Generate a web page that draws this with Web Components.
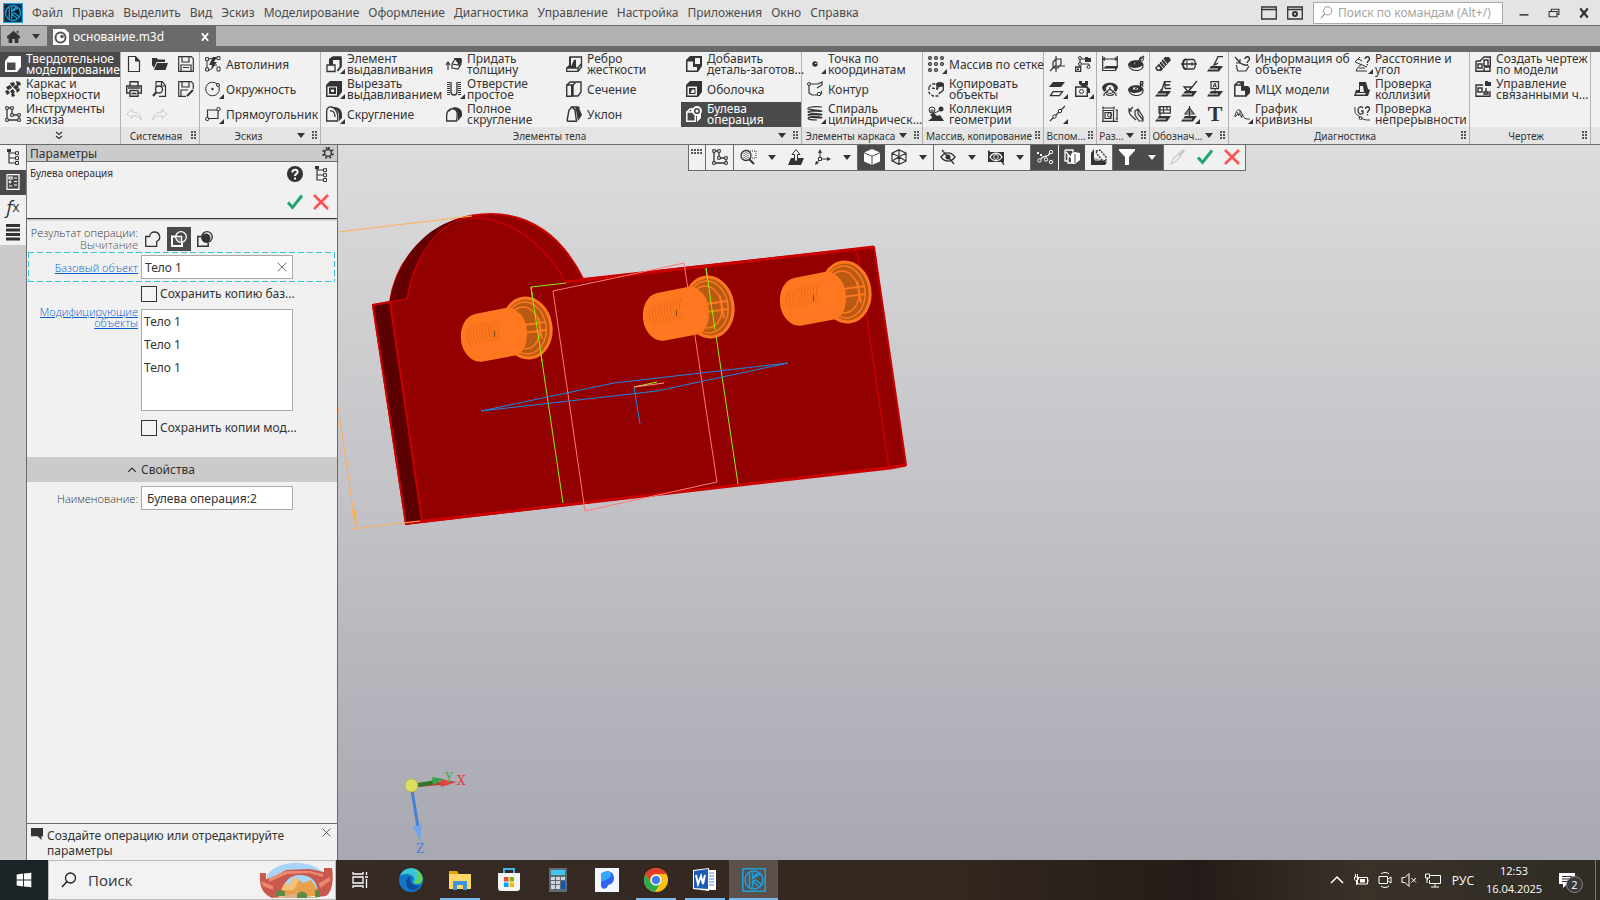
<!DOCTYPE html>
<html lang="ru">
<head>
<meta charset="utf-8">
<title>основание.m3d</title>
<style>
    body {
        margin: 0;
        height: 100vh;
        overflow: hidden;
        font-family: "Noto Sans", "Open Sans", sans-serif;
        font-size: 12px;
        color: #333;
    }
</style>
</head>
<body>
<cad-app></cad-app>

<script>
// 16x16 line icons, F marks a filled shape, W a node drawn over a line
const F = 'fill="currentColor" stroke="none"';
const W = 'fill="#f1f1f1"';
const ICONS = {
    solid: `<path ${F} d="M0 5L4 0h12v11l-4 5H0z"/><path fill="#4a4a4a" stroke="none" d="M2 6.500h8.500V14H2z"/>`,
    surface: `<path ${F} d="M5 2l4-1 1 3-3 2zM11 0l4 1 1 3-4 1zM1 6l4-2 2 3-4 2zM8 6l3-2 3 2-3 3zM0 10l3-1 2 3-3 2zM5 10l3-2 2 3-3 2zM6 13l3-1 1 3-3 1zM11 9l3-2 1 2-3 3z"/>`,
    sketch: `<path stroke-width="1.300" d="M2 2h5v7h7v5H2z"/><path ${W} d="M.700.700h2.600v2.600H.700zM5.700.700h2.600v2.600H5.700zM5.700 7.700h2.600v2.600H5.700zM12.700 7.700h2.600v2.600h-2.600zM12.700 12.700h2.600v2.600h-2.600zM.700 12.700h2.600v2.600H.700z"/>`,
    file: `<path stroke-width="1.200" d="M2.500.500h7l4 4.500v10.500h-11z"/><path ${F} d="M9 0l5 5.500H9z"/>`,
    folder: `<path ${F} d="M0 2h5l1 1.500h7V6H4.500L2 12 0 9zM5 7h11l-2.500 7H2z"/>`,
    save: `<path stroke-width="1.200" d="M.7.700h12.600l2 2v12.600H.700zM4 1v5h7V1M3 15V9h10v6M5 11.500h6"/>`,
    print: `<path stroke-width="1.400" d="M4 5V.700h8V5M4 12H.700V5h14.600v7H12M4 9.500h8v5.800H4zM2 7h12M5.500 12.500h5"/>`,
    preview: `<path stroke-width="1.200" d="M4 6V.700h6l3.500 4v10.600H7M9.500 1v4h4"/><circle cx="7" cy="8.500" r="3.500" stroke-width="1.300"/><path stroke-width="2" d="M4.500 11L1 15"/>`,
    saveas: `<path stroke-width="1.200" d="M8 15.300H.700V.700h12.600l2 2V8M4 1v5h7V1M3 15V9h7"/><path stroke-width="2" d="M9 15l6-6"/>`,
    undo: `<path d="M6 3L1 8l5 4.500V10c4-.500 7 0 9 4 0-5-3-8-9-8z"/>`,
    redo: `<path d="M10 3l5 5-5 4.500V10c-4-.500-7 0-9 4 0-5 3-8 9-8z"/>`,
    auto: `<path d="M2 13V4M3 3l9-1M4 14c4 0 3-5 8-5"/><path ${F} d="M8 1h4L9 6h3l-6 8 1-5H4z"/><path ${W} d="M.600 1.600h3v3h-3zM12 .600h3v3h-3zM.600 12h3v3h-3zM12 11h3v4h-3z"/>`,
    circle: `<circle cx="7.500" cy="8" r="6.800"/><circle cx="7.500" cy="8" r="1.200" ${F}/><circle cx="13" cy="4" r="1.500" ${W}/>`,
    rect: `<path stroke-width="1.200" d="M2.500 4H13v8.500H2.500z"/><circle cx="13.500" cy="3" r="1.700" ${W}/><circle cx="2.200" cy="13" r="1.700" ${W}/>`,
    extrude: `<path stroke-width="2" d="M6 9V3h8.500v8l-3 4"/><path stroke-width="1.300" d="M4 4l3-3h8v10M1 9h8v6.500H1z"/><path ${F} d="M3 3l3-2h9v3H6v5H3z"/>`,
    cut: `<path ${F} d="M0 4l4-4h12v11l-4 5H0z"/><path fill="#f1f1f1" stroke="none" d="M1.500 5.500h9.500v9H1.500z"/><path stroke-width="2" d="M4 7.500h5v4.500H4z"/>`,
    fillet: `<path stroke-width="1.300" d="M.700 15V5c0-6 9-6 11 4v6zM4 5c4-1 5 3 5 6"/><path ${F} d="M5 1h3c6 0 8 4 8 8v3l-3 3V9C12 4 9 2 5 1z"/>`,
    thick: `<path stroke-width="1.200" d="M6 8l3-5h6l-2 6zM6 9v3l6 1 3-5V4M2 14V7M0 9l2-3 2 3"/><path ${F} d="M8 2h7l1 3-3 4z"/>`,
    hole: `<path stroke-width="1.300" d="M5 1v10c0 4 6 4 6 0V1"/><path stroke-dasharray="1 1" stroke-width="3" d="M2.500 1v14M13.500 1v14"/>`,
    full: `<path stroke-width="1.300" d="M.700 15V9c0-5 5-8 9-5 3 3 1 6 1 11zM3 5c3-4 8-4 10-1"/><path ${F} d="M7 2c5-1 9 1 9 5v3l-4 5c0-6 1-9-5-13z"/>`,
    rib: `<path stroke-width="1.300" d="M4 1h11.500v10L12 15.300H.700V12L4 9zM1 12h11l3-4M12 12v3"/><path stroke-width="2" d="M4 1v10l5 0V4l-3 7"/>`,
    section: `<path stroke-width="1.400" d="M.700 4h5v11.300h-5zM7 4l3-3h5v10l-3 4H7zM1 4l3-3h5"/>`,
    draft: `<path stroke-width="1.400" d="M1 15.300h9.500L9 4l-3-3h6l1.500 1M3 4L1 15M3 4l3-3M9 4l2-2"/><path ${F} d="M11 1l2 1 3 7-4 6L10 4z"/>`,
    add: `<path ${F} d="M0 4l4-4h12v10l-4 6H0z"/><path fill="#f1f1f1" stroke="none" d="M1.500 5.500H7V11h4v3.500H1.500zM9 2h5v6H9z"/>`,
    shell: `<path ${F} d="M0 4l4-4h12v11l-4 5H0z"/><path fill="#f1f1f1" stroke="none" d="M1.500 5.500h9.500v9H1.500z"/><path ${F} d="M3 7h6.500v6H3z"/><path fill="#f1f1f1" stroke="none" d="M6 8.500h2.500V12H4.500z"/>`,
    bool: `<path ${F} d="M5 2h4l6 4v6l-4 4V8L5 6z"/><path fill="#4a4a4a" d="M.800 6h8.500v9.200H.800z" stroke-width="1.500"/><path d="M1 6l3-3h4" stroke-width="1.500"/><circle cx="11" cy="5" r="4" fill="#4a4a4a" stroke-width="1.800"/><circle cx="11" cy="5" r="1.500" ${F}/>`,
    point: `<circle cx="8" cy="8" r="2.700" ${F}/><path stroke="#f1f1f1" d="M8 7.500h1.500"/>`,
    contour: `<path stroke-width="1.200" d="M2 3h9l4-2v3M2 4v8l3 2h7c3 0 2-3 3-4M15 4l-5 3"/><circle cx="2" cy="3" r="1.500" ${W}/><circle cx="12" cy="13" r="1.700" ${W}/>`,
    spiral: `<path stroke-width="1.200" d="M15 1C3 0 0 2 1 3s14 1 14 2S1 4 1 6s14 1 14 2.500S1 7 1 9s14 1 14 2.500S1 10 1 12s3 2 9 2"/>`,
    grid: `<g stroke-width="1.300"><circle cx="2" cy="2" r="1.400"/><circle cx="8" cy="2" r="1.400"/><circle cx="14" cy="2" r="1.400"/><circle cx="2" cy="8" r="1.400"/><circle cx="8" cy="8" r="1.400"/><circle cx="14" cy="8" r="1.400"/><circle cx="2" cy="14" r="1.400"/><circle cx="8" cy="14" r="1.400"/></g>`,
    copy: `<path stroke-dasharray="3 1.500" stroke-width="1.300" d="M1 6l3-3h5M1 6v6l4 3h5l2-4M4 7l4 1 4-2"/><path stroke-width="1.300" d="M9 9V3M15.300 3v6l-3 3"/><ellipse cx="12" cy="3.500" rx="4" ry="2.500" ${F}/>`,
    collection: `<circle cx="4" cy="4" r="3"/><circle cx="4" cy="5" r="1.200"/><circle cx="13" cy="3" r="2.500" ${F}/><path d="M2 9l9-4"/><path ${F} d="M3 9l3-2 3 3 3-1 4 6H0l4-3z"/>`,
    axis3d: `<path stroke-width="1.200" d="M7 0v16M1 15l5-5h10M4 6l3-3h5v5l-3 4H4z"/>`,
    planes: `<path ${F} d="M4 1h12l-4 5H0z"/><path stroke-width="1.300" d="M4 10.700h9.500l-3 4H1.500z"/>`,
    segment: `<path stroke-width="1.200" d="M1 15l3.500-3.500M6.500 9.500L10 6M12 4l4-4"/><circle cx="5.500" cy="10.500" r="1.700"/><circle cx="11" cy="5" r="1.700"/>`,
    tree3: `<path stroke-width="1.200" d="M5 2v10M5 8h9M14 8v2M5 3h5"/><circle cx="5" cy="2" r="1.500" ${W}/><circle cx="5" cy="8" r="1.500" ${W}/><path ${F} d="M10 1h2.500l1 1H16v4h-6z"/><path ${W} stroke-width="1.300" d="M.700 11h5v4.300h-5z"/><path ${F} d="M2 12.500h2v1.500H2z"/><circle cx="13.500" cy="11" r="1.500" ${W}/>`,
    camera: `<path stroke-width="1.400" d="M.700 6h11.600v9.300H.700z"/><circle cx="6.500" cy="10.500" r="2"/><path ${F} d="M4 0h3v2h3V0h3v4l-3 2h3l2 2v4h-2V7l-5-1-4-3z"/>`,
    dim: `<path stroke-width="1.200" d="M.700 0v14.500h12.500L15.300 11V0M1 3h14"/><path stroke-width="1.200" d="M3 1.500L1.500 3 3 4.500M13 1.500L14.500 3 13 4.500"/><path ${F} d="M1 12.500l3-2.500h12l-3 5.500V12.500z"/>`,
    disc: `<path ${F} d="M0 8.500C1 4 10 3 14 6c2 2 2 4 1 6-3 5-14 4-15-3.500z"/><path fill="#f1f1f1" stroke="none" d="M1.500 10c3 3 9 2.500 13-.500 0 6-11 6-13 .5z"/><path stroke="#f1f1f1" d="M6 8l3-2"/><path stroke-width="1.500" d="M7 8l9-8"/><circle cx="13.500" cy="3" r="2"/>`,
    disc2: `<path ${F} d="M0 8.500C1 4 10 3 14 6c2 2 2 4 1 6-3 5-14 4-15-3.500z"/><path fill="#f1f1f1" stroke="none" d="M1.500 10c3 3 9 2.500 13-.500 0 6-11 6-13 .5zM5 6.500h5v2H5z"/><path stroke-width="1.200" d="M7 8l5-3M12.500 6V.700h2.300v2.500h-2l2.500 2.500"/>`,
    rings: `<path ${F} d="M0 7C1 0 15 0 16 7l-2 4-3-3V5H5v3l-3 3z"/><circle cx="8" cy="8" r="4.500" ${W}/><path stroke-width="1.200" d="M8 8l-6 5v2M8 8l6 5v2M8 8V6M4 13c2 2 6 2 8 0"/>`,
    frame: `<path stroke-width="1.200" d="M1 4.500h10.500v10.800H1zM1 2h11M1 .500v3M12 .500v3M15 4v9M13.500 4h2.500M13.500 13h2.500M3 6.500h6v6H3zM0 15.300h16"/><circle cx="7.500" cy="9" r="2"/>`,
    turn: `<path stroke-width="1.200" d="M7 5l3-2 5 8v4h-4L7 9zM7 9V5M10 3v5l5 6M1 5l4-4M1 2v3h3M1 5c0 4 3 5 7 9"/>`,
    thread: `<path ${F} d="M0 12L10 1l4 0 2 3L6 15l-4 0z"/><path stroke="#f1f1f1" d="M4 7l4 5M6 5l4 5M8 3l4 5"/><circle cx="3.500" cy="12" r="1.500" fill="#f1f1f1" stroke="none"/>`,
    pipe: `<path stroke-width="1.300" d="M5 3.500h7c3 0 3 9.500 0 9.500H5M0 8h16"/><path stroke-width="2" d="M5 3.500c-2 0-3 2-3 4.500s1 5 3 5"/><path d="M6 4v9M11 6v4"/>`,
    base1: `<path ${F} d="M4 10h12l-4 5.500H0z"/><path stroke="#f1f1f1" d="M2 13h9"/><path stroke-width="1.300" d="M6 11l5-10.300h5M8 9V6M8 9l3-2"/>`,
    base2: `<path ${F} d="M4 10h12l-4 5.500H0z"/><path stroke="#f1f1f1" d="M2 13h9"/><path stroke-width="1.300" d="M6 12L9.500.700H16M10 1v6.500M10 4h5M10 7.500h6M6 12V8"/>`,
    base3: `<path ${F} d="M4 10h12l-4 5.500H0z"/><path stroke="#f1f1f1" d="M2 13h9"/><path ${W} stroke-width="1.300" d="M3 6h7l-2.500 5z"/><path stroke-width="1.300" d="M7 11l9-11"/>`,
    base4: `<path ${F} d="M4 10h12l-4 5.500H0z"/><path stroke="#f1f1f1" d="M2 13h9"/><path ${W} stroke-width="1.200" d="M4 .700h7.500v7H4z"/><path d="M8 8v5M6 6.500L7.800 2l1.700 4.500M6.500 5h2.500"/>`,
    base5: `<path ${F} d="M4 10h12l-4 5.500H0z"/><path stroke="#f1f1f1" d="M2 13h9"/><path ${W} stroke-width="1.200" d="M4 .700h11.300v6.500H4z"/><path stroke-width="1.200" d="M5 12V1M8.500 1v6M12 1v3M4 4h11"/>`,
    base6: `<path ${F} d="M4 10h12l-4 5.500H0z"/><path stroke="#f1f1f1" d="M2 13h9"/><path ${W} stroke-width="1.200" d="M8.500 2l4.500 6H4z"/><path stroke-width="1.200" d="M8.500 0v12M6 6h5"/>`,
    letter: `<text ${F} x="8" y="15" text-anchor="middle" font-family="Liberation Serif, serif" font-size="22" font-weight="bold">T</text>`,
    info: `<path stroke-width="1.200" d="M1 1l5 6M6 3v4H2M2 9c2 3 0 4 2 6h8l3-5M6 7c3 1 4 3 8 2"/><path stroke-width="1.300" d="M11 3c0-3 4.500-3 4.500 0 0 2-2.200 1.500-2.200 4M13.300 8v1.200"/>`,
    mass: `<path stroke-width="1.500" d="M.800 4h7v5h4v6H.800zM1 4l3-3h6"/><path ${F} d="M4 1h6l0 4h4l2 2v5l-4 4V9H8V4z"/>`,
    curve: `<path d="M1 11C2 2 6 2 8 8s6 5 8 5M1 11c3-4 5-4 7 1M3 6l2 4M6 4v5M9 8l-2 3"/>`,
    angle: `<path d="M1 6l5-5M1 6l12 5M2 15h11M4 3l4 2M8 8c-3 2-5 4-6 7M5 12h6"/><path stroke-width="1.300" d="M11 3c0-3 4.500-3 4.500 0 0 2-2.200 1.500-2.200 4M13.300 8v1.200"/>`,
    collide: `<path ${F} d="M5 1h7l2 7 2 1-2 6H0l2-6h3z"/><path fill="#f1f1f1" stroke="none" d="M6 5h3l1 6H6zM2.500 12h9v1.500H2z"/>`,
    cont: `<path d="M1 1v4c0 5 4 3 5 7M7 12c3 2 5 2 9 2"/><circle cx="6.500" cy="12" r="1.500"/><path stroke-width="1.300" d="M9 2C7-.500 4 1 4 4.500S7 9 9 7V5H7M11.500 3c0-3 4-3 4 0 0 2-2 1.500-2 4M13.500 8v1.200"/>`,
    draw: `<path stroke-width="1.400" d="M1 5h5M1 5v10.300h14V11H9M3 8h4v4H3zM9 12v3M5 5l4-4h6.300v9H9V4h4v5"/>`,
    link: `<path stroke-width="1.400" d="M8 4H1v11.300h14V10M3 7h4v4H3zM9 11h4v2H9zM11 7v4"/><path ${F} d="M10 0h2.500l1 1H16v4h-6z"/>`,
    params: `<path stroke-width="1.200" d="M2 .700h12v14.600H2zM4 3h3v2H4zM9 4h3M9 7.500h3M9 11h3M4 7l2 2M6 7L4 9M4 12h3"/>`,
    tree: `<path stroke-width="1.200" d="M4 1v13h6M4 4h6M4 9h6"/><path ${F} d="M2 0h4v3H2z"/><path ${W} d="M10.500 2.700h3v3h-3zM10.500 7.700h3v3h-3zM10.500 12.500h3v3h-3z"/>`,
    bars: `<path stroke-width="3" d="M1 1.500h14M1 6h14M1 10.500h14M1 15h14"/>`,
    gear: `<circle cx="8" cy="8" r="4.500" stroke-width="1.800"/><path stroke-width="2.500" stroke-dasharray="2.400 3.100" d="M8 1.300a6.700 6.700 0 1 1-.010 0"/>`,
    help: `<circle cx="8" cy="8" r="8" ${F}/><path stroke="#fff" stroke-width="2" d="M5.300 6.500c0-4 5.700-3.500 5.400-.500-.2 2-2.700 1.800-2.700 4M8 11.500v2"/>`,
    check: `<path stroke="#22a66b" stroke-width="3" d="M1 8.500l4.500 5L15 1.500"/>`,
    cross: `<path stroke="#ff4f4f" stroke-width="2.500" d="M1 1l14 14M15 1L1 15"/>`,
    union: `<path stroke-width="1.300" d="M.700 5.500h4c0-6 9-6 10 0 .500 3-1 4-3 5v4.800h-11z"/>`,
    subtract: `<path stroke-width="2" d="M5 5.500H1v9.500h10v-3.500"/><circle cx="10" cy="6" r="5.300" stroke-width="1.300"/><path stroke-width="1.500" d="M5 5.500h5.500V11"/><path fill="#777" stroke="none" d="M6 6.300h4v4c-2 0-4-1-4-4z"/>`,
    intersect: `<path stroke-width="1.500" d="M4 5.500H.800v9.700h10.400V12"/><circle cx="10" cy="6" r="5.300" stroke-width="1.300"/><circle cx="9" cy="7" r="4.500" ${F}/>`,
    up: `<path stroke-width="2" d="M2 11l6-6 6 6"/>`,
    chevs: `<path stroke-width="1.200" d="M5 4l3 2.500L11 4M5 8l3 2.500L11 8"/>`,
    xthin: `<path stroke-width="1.300" d="M1 1l14 14M15 1L1 15"/>`,
    xbold: `<path stroke-width="3" d="M3 2l10 12M13 2L3 14"/>`,
    home: `<path ${F} d="M8 1l8 7v2h-2v6H9.500v-5h-3v5H2v-6H0V8zM12 1h2v4l-2-2z"/>`,
    doc: `<path fill="#fff" stroke="none" d="M0 0h12l4 4v12H0z"/><circle cx="7.500" cy="8.500" r="5" stroke="#555" stroke-width="2"/><circle cx="9" cy="7.500" r="1.800" fill="#555" stroke="none"/>`,
    search: `<circle cx="9.500" cy="6" r="5" stroke-width="1.300"/><path stroke-width="1.500" d="M6 9.500L1 15"/>`,
    win: `<path stroke-width="1.300" d="M.700 2h14.600v12H.700zM1 4.500h14"/>`,
    wingear: `<path stroke-width="1.300" d="M.700 2h14.600v12H.700zM1 4.500h14"/><circle cx="8" cy="9" r="2" stroke-width="2"/>`,
    min: `<path stroke-width="2" d="M2 10.500h12"/>`,
    restore: `<path stroke-width="1.500" d="M4.500 6V3h10v7H12M1.500 6h10.500v7H1.500z"/>`,
    zoomsel: `<circle cx="6" cy="6.500" r="5" stroke-width="1.300"/><path stroke-width="2" d="M9.500 10.500L14 15"/><path stroke-dasharray="1 1" d="M8 2h8v7h-4M4 4v5M6 3v7M8 4v5"/>`,
    normal: `<path ${F} d="M3 9h13l-3 7H0z"/><path ${W} d="M8 .500l4 5H9.500V12h-3V5.500H4z"/>`,
    axes: `<path d="M5 2v8h9M5 10l-4 5"/><path ${F} d="M3 4l2-4 2 4zM12 8l4 2-4 2zM0 16l1-4 3 2z"/><path ${W} d="M3.500 8.500h3v3h-3z"/>`,
    cube: `<path ${F} d="M8 0l8 3.500v9L8 16l-8-3.500v-9z"/><path stroke="#4a4a4a" d="M0 3.700l8 3.500 8-3.500M8 7v9"/>`,
    wire: `<path stroke-width="1.200" d="M8 .700l7 3.500v8L8 15.300l-7-3.500V4.200zM1 4.200l7 3.500 7-3.500M8 7.700v7.600M1 12l7-4 7 4M8 .700v7"/>`,
    eyeoff: `<path stroke-width="1.300" d="M1 8c4-5.500 10-5.500 14 0-4 5.500-10 5.500-14 0zM2 1l12 14"/><circle cx="8" cy="8" r="2.500" ${F}/>`,
    eyebox: `<path ${F} d="M0 2l1-1 1 2h14v10H0z"/><path stroke="#f1f1f1" stroke-width="1.300" d="M2 8c3-5 9-5 12 0-3 5-9 5-12 0z"/><circle cx="8" cy="8" r="2.300" stroke="#f1f1f1"/><path stroke-width="1.500" d="M14 13l2 2.500"/>`,
    percent: `<path stroke-width="1.200" d="M4 10c2-4 7-1 9-6"/><path ${F} d="M0 3h2v2H0zM3 5h2v2H3z"/><circle cx="14" cy="3" r="1.700"/><circle cx="2.500" cy="11.500" r="1.700"/><circle cx="9" cy="10.500" r="1.700"/><circle cx="14" cy="13" r="1.700"/>`,
    snap: `<path stroke-width="1.300" d="M1 1h8v4M1 1v11h3M2 3l8 9M4 5v9h6"/><path ${F} d="M7 5l4-2 5 1v7l-5 4-4-1z"/><path stroke="#4a4a4a" d="M11 5v9"/>`,
    corner: `<path ${F} d="M0 4l3-4v9l13 4-2 3H0z"/><path stroke="#f1f1f1" d="M4 5v6h5"/><path stroke-dasharray="2 1" stroke-width="1.300" d="M5 2l4-1 6 7v4l-4-1-5-6z"/>`,
    funnel: `<path ${F} d="M0 0h16v1.500L10 8v8H6V8L0 1.500z"/>`,
    pick: `<path stroke="#ccc" stroke-width="1.300" d="M1 15l2-5 6-5 2 2-6 6z"/><path stroke="#ccc" stroke-width="3.500" d="M9 6l5-5"/>`,
    note: `<path ${F} d="M0 0h16v11h-2v5l-5-5H0z"/>`,
    taskview: `<path stroke-width="1.300" d="M1 0v2h10V0M1 16v-2h10v2M1 5h10v6H1zM14.500 0v3M14.500 7v9M13 5h3"/>`,
    chev: `<path stroke-width="1.500" d="M2 11l6-6 6 6"/>`,
    battery: `<path d="M4.500 5.500h10v6.500h-10zM15 7.500v2.500M2.500 2v3M4.500 2v3M1.500 5h4v2c0 1-1 1.500-2 1.500s-2-.500-2-1.500zM3.500 8v5"/><path ${F} d="M7 7h5v3.500H7z"/>`,
    meet: `<path d="M2 4.500h8.500v7H2zM11 7l3-2v6l-3-2M4 2c2-2 6-2 8 0M4 14c2 2 6 2 8 0"/>`,
    sound: `<path d="M1 5.500h3l4-4v13l-4-4H1zM10.500 6l4.500 4.500M15 6l-4.500 4.500"/>`,
    net: `<path d="M5 3.500h10.500v8H4.500V8M10 12v3M6 15h8M2 7v4M0.500 2h4v4h-4zM2.500 6v2"/>`,
    notif: `<path ${F} d="M0 1h16v11H8l-4 4v-4H0z"/><path stroke="#352f27" d="M3 4.500h10M3 7h10M3 9.500h7"/>`,
    kompas: `<g stroke="#1ba1e2"><path d="M.500.500h15v15H.500z"/><circle cx="8" cy="8" r="6"/><path d="M5 3v10M7 3v4l3.500-4M7 13V9l4.500 3.500M7 7l5-3M7 9l2-1 4 3"/></g>`,
};

// Taskbar pictures on a 24x24 grid
const LOGOS = {
    start: `<path fill="#fff" d="M4 6l7-1v6.500H4zM12 5l8-1v7.500h-8zM4 12.500h7V19l-7-1zM12 12.500h8V20l-8-1z"/>`,
    edge: `<circle cx="12" cy="12" r="12" fill="#1278c9"/><path fill="#39c6d6" d="M1 8C4-1 17-3 22 6c3 5 1 10-4 10-4 0-5-2-3-4C16 6 6 4 1 8z"/><path fill="#63d45a" d="M16 1c7 3 10 10 6 14-2 1-6 1-7-1 5-3 4-9 1-13z"/><path fill="#0d4f97" d="M7 14c0-3 2-5 5-5-3 4 1 9 9 9-7 8-14 3-14-4z"/>`,
    explorer: `<path fill="#e6a400" d="M1 3h8l2 3h12v4H1z"/><path fill="#ffd766" d="M1 6h22v15H1z"/><path fill="#3f95dd" d="M5 22v-9h14v9h-4v-5H9v5z"/>`,
    store: `<path fill="none" stroke="#3cb8ee" stroke-width="2" d="M7 6V1h10v5"/><path fill="#f5f5f5" d="M1 5h22v15a3 3 0 0 1-3 3H4a3 3 0 0 1-3-3z"/><path fill="#e8502f" d="M7 9h4.500v4.500H7z"/><path fill="#7fba00" d="M12.500 9H17v4.500h-4.500z"/><path fill="#00a4ef" d="M7 14.500h4.500V19H7z"/><path fill="#ffb900" d="M12.500 14.500H17V19h-4.500z"/>`,
    calc: `<path fill="#5f6b76" d="M3 0h18v24H3z"/><path fill="#40c7ee" d="M5 2h14v5H5z"/><path fill="#cfd6dc" d="M5 9h4v3H5zM10 9h4v3h-4zM15 9h4v3h-4zM5 13h4v3H5zM10 13h4v3h-4zM5 17h4v4H5zM10 17h4v4h-4z"/><path fill="#0f59a8" d="M15 13h4v8h-4z"/>`,
    pblue: `<path fill="#f4f6ff" d="M0 0h24v24H0z"/><path fill="#2f63f2" d="M6 6c5-5 13-3 13 4 0 5-4 7-6 7-1 5-7 5-7 0z"/><path fill="#34a8ff" d="M6 6c3-3 8-3 10-1 0 6-5 7-10 9z"/>`,
    chrome: `<circle cx="12" cy="12" r="12" fill="#fbc116"/><path fill="#e33b2e" d="M1.600 6A12 12 0 0 1 22.400 6H12a6 6 0 0 0-5.200 9z"/><path fill="#2da94f" d="M1.600 6a12 12 0 0 0 9.400 18l5.200-9H6.800z"/><circle cx="12" cy="12" r="5.500" fill="#fff"/><circle cx="12" cy="12" r="4.300" fill="#3c7ff0"/>`,
    word: `<path fill="#fff" d="M10 2h13v20H10z"/><path stroke="#5b87cc" d="M15 5h6M15 8h6M15 11h6M15 14h6M15 17h6"/><path fill="#fff" d="M0 2l16-2v23L0 21z"/><path fill="#1d5bb5" d="M1 3l14-2v20L1 20z"/><path fill="none" stroke="#fff" stroke-width="2" d="M3 7l2 9 3-8 2 8 2-9"/>`,
};

class CadIcon extends HTMLElement {
    constructor() {
        super();
        this.attachShadow({ mode: 'open' });
    }

    connectedCallback() {
        const name = this.getAttribute('name');
        const logo = LOGOS[name];
        this.shadowRoot.innerHTML = `
            <style>
                :host { display: block; width: var(--size, 16px); height: var(--size, 16px); flex: none; }
                svg { display: block; width: 100%; height: 100%; overflow: visible; }
            </style>
            ${logo
                ? `<svg viewBox="0 0 24 24" aria-hidden="true">${logo}</svg>`
                : `<svg viewBox="0 0 16 16" fill="none" stroke="currentColor" aria-hidden="true">${ICONS[name]}</svg>`}
        `;
    }
}
customElements.define('cad-icon', CadIcon);

// Small drop-down triangle
class CadArrow extends HTMLElement {
    constructor() {
        super();
        this.attachShadow({ mode: 'open' }).innerHTML = `
            <style>
                :host { display: block; flex: none; width: 0; height: 0; border: 4px solid transparent; border-top: 5px solid currentColor; border-bottom: 0; }
            </style>
        `;
    }
}
customElements.define('cad-arrow', CadArrow);

class MenuBar extends HTMLElement {
    constructor() {
        super();
        this.attachShadow({ mode: 'open' });
    }

    connectedCallback() {
        const items = ['Файл', 'Правка', 'Выделить', 'Вид', 'Эскиз', 'Моделирование', 'Оформление', 'Диагностика',
            'Управление', 'Настройка', 'Приложения', 'Окно', 'Справка'];
        this.shadowRoot.innerHTML = `
            <style>
                :host { display: flex; align-items: center; height: 25px; background: #e4e4e4; border-bottom: 1px solid #6a6a6a; color: #4b4b4b; }
                button { border: 0; background: none; font: inherit; color: inherit; padding: 0; line-height: 20px; }
                .logo { --size: 20px; background: #10202c; margin: 0 3px; }
                nav { display: flex; flex: 1; gap: 9px; padding-left: 6px; }
                .tools { display: flex; align-items: center; gap: 10px; color: #333; }
                .search { display: flex; align-items: center; gap: 5px; width: 182px; height: 20px; border: 1px solid #aaa; background: #fff; padding: 0 0 0 6px; color: #999; --size: 13px; }
                input { border: 0; outline: 0; flex: 1; min-width: 0; padding: 0; font: inherit; color: #333; background: none; }
                input::placeholder { color: #a3a3a3; opacity: 1; }
                .window { display: flex; align-items: center; gap: 18px; padding: 0 10px 0 15px; --size: 14px; color: #333; }
                .window :last-child { --size: 12px; }
            </style>
            <cad-icon class="logo" name="kompas"></cad-icon>
            <nav>${items.map(t => `<button>${t}</button>`).join('')}</nav>
            <div class="tools">
                <button aria-label="Окно"><cad-icon name="win"></cad-icon></button>
                <button aria-label="Настройка окна"><cad-icon name="wingear"></cad-icon></button>
                <label class="search"><cad-icon name="search"></cad-icon><input type="text" placeholder="Поиск по командам (Alt+/)" aria-label="Поиск по командам"></label>
            </div>
            <div class="window">
                <button aria-label="Свернуть"><cad-icon name="min"></cad-icon></button>
                <button aria-label="Развернуть"><cad-icon name="restore"></cad-icon></button>
                <button aria-label="Закрыть"><cad-icon name="xbold"></cad-icon></button>
            </div>
        `;
    }
}
customElements.define('menu-bar', MenuBar);

class TabStrip extends HTMLElement {
    constructor() {
        super();
        this.attachShadow({ mode: 'open' }).innerHTML = `
            <style>
                :host { display: flex; height: 20px; background: #b1b1b1; border-bottom: 6px solid #6a6a6a; }
                button { border: 0; background: none; padding: 0; color: inherit; }
                .home { display: flex; align-items: center; gap: 12px; padding: 0 7px 0 6px; --size: 13px; border-left: 1px solid #6a6a6a; }
                .tab { display: flex; align-items: center; gap: 4px; width: 157px; padding: 2px 6px 0; background: #6a6a6a; color: #fff; line-height: 16px; }
                .tab span { flex: 1; }
                .tab button { --size: 10px; }
            </style>
            <button class="home" aria-label="Главная"><cad-icon name="home"></cad-icon><cad-arrow></cad-arrow></button>
            <div class="tab"><cad-icon name="doc"></cad-icon><span><slot></slot></span>
                <button aria-label="Закрыть вкладку"><cad-icon name="xbold"></cad-icon></button></div>
        `;
    }
}
customElements.define('tab-strip', TabStrip);

// One command of the ribbon; without text it is a square icon button
class RibbonButton extends HTMLElement {
    constructor() {
        super();
        this.attachShadow({ mode: 'open' });
    }

    connectedCallback() {
        const hasText = this.textContent.trim() !== '';
        this.shadowRoot.innerHTML = `
            <style>
                :host { display: block; width: 120px; height: 25px; }
                :host([square]) { width: 26px; }
                :host([active]) { background: #4a4a4a; color: #fff; }
                :host([off]) { color: #c9c9c9; }
                button { display: flex; align-items: center; gap: 5px; width: 100%; height: 100%; padding: 0 0 1px 5px; border: 0; background: none; font: inherit; color: inherit; line-height: 11px; text-align: left; white-space: nowrap; position: relative; }
                .more::after { content: ""; position: absolute; left: 19px; bottom: 3px; width: 5px; height: 5px; background: currentColor; clip-path: polygon(100% 0, 100% 100%, 0 100%); }
            </style>
            <button class="${this.hasAttribute('more') ? 'more' : ''}" ${hasText ? '' : `aria-label="${this.getAttribute('icon')}"`}>
                <cad-icon name="${this.getAttribute('icon')}"></cad-icon>
                ${hasText ? '<span><slot></slot></span>' : ''}
            </button>
        `;
    }
}
customElements.define('ribbon-button', RibbonButton);

class RibbonGroup extends HTMLElement {
    constructor() {
        super();
        this.attachShadow({ mode: 'open' });
    }

    connectedCallback() {
        const label = this.getAttribute('label');
        this.shadowRoot.innerHTML = `
            <style>
                :host { display: flex; flex-direction: column; flex: none; border-left: 1px solid #b1b1b1; }
                :host([first]) { border-left: 0; }
                .items { display: grid; grid-template-rows: repeat(3, 25px); grid-auto-flow: column; height: 75px; justify-content: start; }
                footer { display: flex; align-items: center; height: 17px; background: #e4e4e4; font-size: 10px; padding-right: 3px; }
                footer span { display: flex; justify-content: center; flex: 1; white-space: nowrap; width: 0; }
                footer cad-arrow { margin-right: 7px; }
                .grip { width: 5px; height: 9px; background: radial-gradient(circle at 1px 1px, #555 1px, transparent 1px) 0 0 / 3px 3px; }
            </style>
            <div class="items"><slot></slot></div>
            <footer><span>${label || '<cad-icon name="chevs"></cad-icon>'}</span>
                ${this.hasAttribute('menu') ? '<cad-arrow></cad-arrow>' : ''}
                ${label ? '<i class="grip"></i>' : ''}</footer>
        `;
    }
}
customElements.define('ribbon-group', RibbonGroup);

class CadRibbon extends HTMLElement {
    constructor() {
        super();
        this.attachShadow({ mode: 'open' }).innerHTML = `
            <style>
                :host { display: flex; background: #f1f1f1; border-bottom: 1px solid #6a6a6a; }
                .rest { flex: 1; border-left: 1px solid #b1b1b1; background: linear-gradient(#f1f1f1 75px, #e4e4e4 75px); }
                ribbon-group[first] { width: 120px; }
            </style>
            <ribbon-group first>
                <ribbon-button icon="solid" active>Твердотельное<br>моделирование</ribbon-button>
                <ribbon-button icon="surface">Каркас и<br>поверхности</ribbon-button>
                <ribbon-button icon="sketch">Инструменты<br>эскиза</ribbon-button>
            </ribbon-group>
            <ribbon-group label="Системная">
                <ribbon-button square icon="file"></ribbon-button>
                <ribbon-button square icon="print"></ribbon-button>
                <ribbon-button square icon="undo" off></ribbon-button>
                <ribbon-button square icon="folder"></ribbon-button>
                <ribbon-button square icon="preview"></ribbon-button>
                <ribbon-button square icon="redo" off></ribbon-button>
                <ribbon-button square icon="save"></ribbon-button>
                <ribbon-button square icon="saveas"></ribbon-button>
            </ribbon-group>
            <ribbon-group label="Эскиз" menu>
                <ribbon-button icon="auto">Автолиния</ribbon-button>
                <ribbon-button icon="circle" more>Окружность</ribbon-button>
                <ribbon-button icon="rect" more>Прямоугольник</ribbon-button>
            </ribbon-group>
            <ribbon-group label="Элементы тела" menu>
                <ribbon-button icon="extrude" more>Элемент<br>выдавливания</ribbon-button>
                <ribbon-button icon="cut" more>Вырезать<br>выдавливанием</ribbon-button>
                <ribbon-button icon="fillet" more>Скругление</ribbon-button>
                <ribbon-button icon="thick">Придать<br>толщину</ribbon-button>
                <ribbon-button icon="hole" more>Отверстие<br>простое</ribbon-button>
                <ribbon-button icon="full">Полное<br>скругление</ribbon-button>
                <ribbon-button icon="rib">Ребро<br>жесткости</ribbon-button>
                <ribbon-button icon="section">Сечение</ribbon-button>
                <ribbon-button icon="draft">Уклон</ribbon-button>
                <ribbon-button icon="add">Добавить<br>деталь-заготов...</ribbon-button>
                <ribbon-button icon="shell">Оболочка</ribbon-button>
                <ribbon-button icon="bool" active>Булева<br>операция</ribbon-button>
            </ribbon-group>
            <ribbon-group label="Элементы каркаса" menu>
                <ribbon-button icon="point" more>Точка по<br>координатам</ribbon-button>
                <ribbon-button icon="contour">Контур</ribbon-button>
                <ribbon-button icon="spiral" more>Спираль<br>цилиндрическ...</ribbon-button>
            </ribbon-group>
            <ribbon-group label="Массив, копирование">
                <ribbon-button icon="grid" more>Массив по сетке</ribbon-button>
                <ribbon-button icon="copy">Копировать<br>объекты</ribbon-button>
                <ribbon-button icon="collection">Коллекция<br>геометрии</ribbon-button>
            </ribbon-group>
            <ribbon-group label="Вспом...">
                <ribbon-button square icon="axis3d"></ribbon-button>
                <ribbon-button square icon="planes" more></ribbon-button>
                <ribbon-button square icon="segment" more></ribbon-button>
                <ribbon-button square icon="tree3"></ribbon-button>
                <ribbon-button square icon="camera" more></ribbon-button>
            </ribbon-group>
            <ribbon-group label="Раз..." menu>
                <ribbon-button square icon="dim"></ribbon-button>
                <ribbon-button square icon="rings"></ribbon-button>
                <ribbon-button square icon="frame"></ribbon-button>
                <ribbon-button square icon="disc"></ribbon-button>
                <ribbon-button square icon="disc2"></ribbon-button>
                <ribbon-button square icon="turn"></ribbon-button>
            </ribbon-group>
            <ribbon-group label="Обознач..." menu>
                <ribbon-button square icon="thread"></ribbon-button>
                <ribbon-button square icon="base2"></ribbon-button>
                <ribbon-button square icon="base5"></ribbon-button>
                <ribbon-button square icon="pipe"></ribbon-button>
                <ribbon-button square icon="base3"></ribbon-button>
                <ribbon-button square icon="base6" more></ribbon-button>
                <ribbon-button square icon="base1"></ribbon-button>
                <ribbon-button square icon="base4"></ribbon-button>
                <ribbon-button square icon="letter"></ribbon-button>
            </ribbon-group>
            <ribbon-group label="Диагностика">
                <ribbon-button icon="info">Информация об<br>объекте</ribbon-button>
                <ribbon-button icon="mass">МЦХ модели</ribbon-button>
                <ribbon-button icon="curve" more>График<br>кривизны</ribbon-button>
                <ribbon-button icon="angle" more>Расстояние и<br>угол</ribbon-button>
                <ribbon-button icon="collide">Проверка<br>коллизий</ribbon-button>
                <ribbon-button icon="cont">Проверка<br>непрерывности</ribbon-button>
            </ribbon-group>
            <ribbon-group label="Чертеж">
                <ribbon-button icon="draw">Создать чертеж<br>по модели</ribbon-button>
                <ribbon-button icon="link">Управление<br>связанными ч...</ribbon-button>
            </ribbon-group>
            <div class="rest"></div>
        `;
    }
}
customElements.define('cad-ribbon', CadRibbon);

class SideStrip extends HTMLElement {
    constructor() {
        super();
        this.attachShadow({ mode: 'open' }).innerHTML = `
            <style>
                :host { display: block; width: 26px; flex: none; background: #cbcbcb; border-right: 1px solid #6a6a6a; }
                button { display: flex; align-items: center; justify-content: center; width: 26px; height: 25px; padding: 0 0 1px; border: 0; background: #f1f1f1; color: #333; }
                .on { background: #4a4a4a; color: #fff; }
                .fx { font: italic 18px/20px "Open Sans", sans-serif; }
                sub { font-size: 14px; font-style: normal; line-height: 0; }
            </style>
            <button aria-label="Дерево"><cad-icon name="tree"></cad-icon></button>
            <button class="on" aria-label="Параметры"><cad-icon name="params"></cad-icon></button>
            <button class="fx">f<sub>x</sub></button>
            <button aria-label="Список"><cad-icon name="bars"></cad-icon></button>
        `;
    }
}
customElements.define('side-strip', SideStrip);

class ParamsPanel extends HTMLElement {
    constructor() {
        super();
        this.attachShadow({ mode: 'open' }).innerHTML = `
            <style>
                :host { display: flex; flex-direction: column; flex: none; width: 310px; background: #f1f1f1; border-right: 1px solid #6a6a6a; }
                button { border: 0; background: none; padding: 0; color: inherit; font: inherit; }
                header { display: flex; align-items: center; justify-content: space-between; height: 16px; padding: 0 3px; background: #cbcbcb; border-bottom: 1px solid #6a6a6a; --size: 12px; }
                .head { display: grid; grid-template-columns: 1fr 16px 16px; gap: 12px 10px; align-content: start; height: 52px; padding: 4px 8px 0 3px; border-bottom: 1px solid #333; box-shadow: 0 1px 2px #aaa; font-size: 10px; line-height: 14px; }
                .head .ok { grid-column: 2; }
                .row { display: grid; grid-template-columns: 111px 152px; column-gap: 3px; }
                .row > :first-child { justify-self: end; text-align: right; line-height: 11px; align-self: center; white-space: nowrap; }
                .light, a { font-family: "Open Sans", sans-serif; font-weight: 300; font-size: 11px; }
                a { color: #0a5fd0; text-decoration: underline; }
                .result { padding: 8px 0 0; }
                .modes { display: flex; gap: 2px; align-items: center; }
                .modes button { width: 24px; height: 24px; display: flex; align-items: center; justify-content: center; }
                .modes .on { background: #4a4a4a; color: #fff; }
                .result > :first-child { line-height: 12px; }
                .muted { color: #555; }
                .target {
                    --h: repeating-linear-gradient(90deg, #35c6dc 0 6px, transparent 6px 9px);
                    --v: repeating-linear-gradient(#35c6dc 0 6px, transparent 6px 9px);
                    margin: 1px 2px 0 1px; padding: 3px 0; grid-template-columns: 110px 152px;
                    background: var(--h) 0 0 / 100% 1px, var(--h) 0 100% / 100% 1px, var(--v) 0 0 / 1px 100%, var(--v) 100% 0 / 1px 100%;
                    background-repeat: no-repeat;
                }
                .field { display: flex; align-items: center; height: 22px; border: 1px solid #aaa; background: #fff; padding: 0 5px 0 3px; }
                .field button { --size: 10px; color: #555; }
                .field.named { padding-left: 5px; }
                input[type=text] { flex: 1; min-width: 0; border: 0; outline: 0; padding: 0; background: none; font: inherit; color: inherit; }
                .keep { display: flex; align-items: center; gap: 3px; margin-left: 114px; }
                .target + .keep { margin-top: 3px; }
                input[type=checkbox] { appearance: none; width: 16px; height: 16px; margin: 0; border: 1px solid #333; background: #f4f4f4; }
                ul { margin: 0; padding: 0 2px; list-style: none; height: 100px; border: 1px solid #aaa; background: #fff; line-height: 23px; }
                .mods { padding: 7px 0 8px; }
                .mods > :first-child { align-self: start; margin-top: -3px; }
                h2 { display: flex; align-items: center; gap: 4px; height: 25px; margin: 21px 0 4px; padding-left: 100px; background: #cbcbcb; font: inherit; --size: 10px; }
                .hint { display: flex; gap: 4px; margin-top: auto; padding: 4px 6px 2px 4px; border-top: 1px solid #6a6a6a; line-height: 15px; --size: 12px; }
                .hint p { flex: 1; margin: 0; }
                .hint button { align-self: start; --size: 9px; }
            </style>
            <header><span>Параметры</span><button aria-label="Настройка"><cad-icon name="gear"></cad-icon></button></header>
            <div class="head">
                <span>Булева операция</span>
                <button aria-label="Справка"><cad-icon name="help"></cad-icon></button>
                <button aria-label="Дерево"><cad-icon name="tree"></cad-icon></button>
                <button class="ok" aria-label="Создать"><cad-icon name="check"></cad-icon></button>
                <button aria-label="Отмена"><cad-icon name="cross"></cad-icon></button>
            </div>
            <div class="row result">
                <div class="light">Результат операции:<br><span class="muted">Вычитание</span></div>
                <div class="modes">
                    <button aria-label="Объединение"><cad-icon name="union"></cad-icon></button>
                    <button class="on" aria-label="Вычитание"><cad-icon name="subtract"></cad-icon></button>
                    <button aria-label="Пересечение"><cad-icon name="intersect"></cad-icon></button>
                </div>
            </div>
            <div class="row target">
                <div><a href="#base">Базовый объект</a></div>
                <div class="field"><input type="text" value="Тело 1" aria-label="Базовый объект"><button aria-label="Очистить"><cad-icon name="xthin"></cad-icon></button></div>
            </div>
            <label class="keep"><input type="checkbox">Сохранить копию баз...</label>
            <div class="row mods">
                <div><a href="#mods">Модифицирующие<br>объекты</a></div>
                <ul aria-label="Модифицирующие объекты"><li>Тело 1</li><li>Тело 1</li><li>Тело 1</li></ul>
            </div>
            <label class="keep"><input type="checkbox">Сохранить копии мод...</label>
            <h2><cad-icon name="up"></cad-icon>Свойства</h2>
            <div class="row">
                <label class="light" for="name">Наименование:</label>
                <div class="field named"><input type="text" id="name" value="Булева операция:2"></div>
            </div>
            <div class="hint">
                <cad-icon name="note"></cad-icon>
                <p>Создайте операцию или отредактируйте параметры</p>
                <button aria-label="Закрыть"><cad-icon name="xthin"></cad-icon></button>
            </div>
        `;
    }
}
customElements.define('params-panel', ParamsPanel);

// Toolbar floating over the model
class ViewToolbar extends HTMLElement {
    constructor() {
        super();
        this.attachShadow({ mode: 'open' }).innerHTML = `
            <style>
                :host { display: flex; height: 25px; background: #f1f1f1; border: 1px solid #6a6a6a; border-top: 0; color: #333; }
                div { display: flex; border-left: 1px solid #6a6a6a; }
                button { display: flex; align-items: center; justify-content: center; width: 27px; padding: 0 0 1px; border: 0; background: none; color: inherit; }
                .drop { width: 21px; }
                .drop.on { width: 23px; }
                .on { background: #4a4a4a; color: #fff; }
                .on + .on:not(.drop) { border-left: 1px solid #f1f1f1; }
                .grip { width: 12px; height: 6px; margin: 4px 2px; background: radial-gradient(circle at 1px 1px, #555 1px, transparent 1px) 0 0 / 3px 3px; }
            </style>
            <i class="grip"></i>
            <div><button aria-label="Эскиз"><cad-icon name="sketch"></cad-icon></button></div>
            <div>
                <button aria-label="Масштаб"><cad-icon name="zoomsel"></cad-icon></button><button class="drop" aria-label="Ещё"><cad-arrow></cad-arrow></button>
                <button aria-label="Нормально"><cad-icon name="normal"></cad-icon></button>
                <button aria-label="Ориентация"><cad-icon name="axes"></cad-icon></button><button class="drop" aria-label="Ещё"><cad-arrow></cad-arrow></button>
            </div>
            <div>
                <button class="on" aria-label="Полутоновое"><cad-icon name="cube"></cad-icon></button>
                <button aria-label="Каркас"><cad-icon name="wire"></cad-icon></button><button class="drop" aria-label="Ещё"><cad-arrow></cad-arrow></button>
            </div>
            <div>
                <button aria-label="Скрыть"><cad-icon name="eyeoff"></cad-icon></button><button class="drop" aria-label="Ещё"><cad-arrow></cad-arrow></button>
                <button aria-label="Показать"><cad-icon name="eyebox"></cad-icon></button><button class="drop" aria-label="Ещё"><cad-arrow></cad-arrow></button>
            </div>
            <div>
                <button class="on" aria-label="Привязки"><cad-icon name="percent"></cad-icon></button>
                <button class="on" aria-label="Компоненты"><cad-icon name="snap"></cad-icon></button>
                <button aria-label="Контекст"><cad-icon name="corner"></cad-icon></button>
            </div>
            <div>
                <button class="on" aria-label="Фильтр"><cad-icon name="funnel"></cad-icon></button><button class="drop on" aria-label="Ещё"><cad-arrow></cad-arrow></button>
            </div>
            <div>
                <button aria-label="Пипетка"><cad-icon name="pick"></cad-icon></button>
                <button aria-label="Создать"><cad-icon name="check"></cad-icon></button>
                <button aria-label="Отмена"><cad-icon name="cross"></cad-icon></button>
            </div>
        `;
    }
}
customElements.define('view-toolbar', ViewToolbar);

class ModelView extends HTMLElement {
    constructor() {
        super();
        this.attachShadow({ mode: 'open' });
    }

    // Threaded hole body: a shank made of rings plus the countersink
    bolt(dx, dy) {
        let rings = '';
        for (let i = 0; i < 11; i++) {
            rings += `<path d="M${470 + i * 3} ${326 - i * 0.700}q-6 8 1 20"/>`;
        }
        return `
            <g transform="translate(${dx} ${dy})" fill="none" stroke="#ff781f">
                <ellipse cx="527" cy="328" rx="24" ry="30" fill="#b85a14" stroke-width="3" transform="rotate(-8 527 328)"/>
                <ellipse cx="526" cy="328" rx="20" ry="26" stroke-width="1.500" transform="rotate(-8 526 328)"/>
                <ellipse cx="524" cy="328" rx="16" ry="21" stroke-width="1.500" transform="rotate(-8 524 328)"/>
                <path stroke-width="2" d="M524 325l22-3M524 333l22-3M538 317l4 22"/>
                <path fill="#ff781f" stroke="none" d="M475 314l33-6.500c12 2 19 12 19 26 0 12-4 20-12 22l-32 6c-11 2-21-9-22-22-1-12 4-23 14-25.500z"/>
                <g stroke="#cf6018" stroke-width=".5">${rings}</g>
                <path stroke="#8a4510" d="M494.500 331v6"/>
            </g>`;
    }

    connectedCallback() {
        this.shadowRoot.innerHTML = `
            <style>
                :host { display: block; flex: 1; min-width: 0; position: relative; overflow: hidden; background: linear-gradient(#dcdcdc, #a8a8b2); }
                svg { position: absolute; left: 0; top: 0; }
                view-toolbar { position: absolute; left: 350px; top: 0; }
                text { font: 12px "DejaVu Serif", serif; }
            </style>
            <svg width="1262" height="715" viewBox="338 145 1262 715" fill="none">
                <g stroke="#c80000" stroke-width="2" stroke-linejoin="round">
                    <path fill="#930000" d="M390 302C397 252 440 214 491 214C530 214 562 236 583 279L874 247L906 465L406 524L373 305z"/>
                    <path fill="#640000" stroke="none" d="M390 301C397 258 430 219 472 217C440 226 415 255 407 299z"/>
                    <path fill="#5a0000" d="M373 305L390 302L422 521L406 524z"/>
                    <path stroke-width="1.500" d="M390 302l17-3C415 250 445 218 472 218C508 217 545 243 566 283M857 251L889 468"/>
                    <path stroke-width="3" d="M566 282L874 247M407 523L890 468l16-3"/>
                </g>
                <g stroke="#ffae55">
                    <path d="M338 232L472 216M338 407L356 528M351 529L420 521"/>
                    <path fill="#ffae55" stroke="none" d="M351 510l5-1 1 18z"/>
                </g>
                <path stroke="#f77" d="M553 291L610 279L684 263L717 482L585 511z"/>
                <path stroke="#8ef000" d="M566 283L531 287L563 503M706 268L738 484M634 387L657 382"/>
                <path stroke="#1d87e6" d="M481 411L614 383L788 363L657 391zM634 387L640 424"/>
                <path stroke="#f99" d="M634 387L664 383"/>
                ${this.bolt(0, 0)}${this.bolt(182, -21)}${this.bolt(319, -36)}
                <path stroke="#8ef000" d="M706 268L715 330M531 287L542 361"/>
                <g>
                    <path stroke="#c33" stroke-width="3" d="M412 786l34-3"/><path fill="#e04444" d="M440 779l17 3-16 5z"/>
                    <path stroke="#2a7a2a" stroke-width="4" d="M412 786l24-4"/><path fill="#39a34a" d="M432 777l12 2-11 6z"/>
                    <path stroke="#4a7fd6" stroke-width="3" d="M412 790l6 37"/><path fill="#6aa5ee" d="M413 826l9-1-2 16z"/>
                    <circle cx="411.500" cy="785.500" r="6.500" fill="#dede5e" stroke="#a5a53a" stroke-width=".5"/>
                    <text x="445" y="782" fill="#3cae4c">Y</text>
                    <text x="457" y="785" fill="#e23b3b">X</text>
                    <text x="416" y="853" fill="#4c7fe0">Z</text>
                </g>
            </svg>
            <view-toolbar></view-toolbar>
        `;
    }
}
customElements.define('model-view', ModelView);

class TaskBar extends HTMLElement {
    constructor() {
        super();
        this.attachShadow({ mode: 'open' }).innerHTML = `
            <style>
                :host { display: flex; height: 40px; flex: none; color: #fff; background: linear-gradient(90deg, #382d28, #33271f 60%, #231c18 75%, #3a3229 85%, #2f2c24); font-family: "Open Sans", sans-serif; }
                button { display: flex; align-items: center; justify-content: center; width: 49px; padding: 0; border: 0; background: none; color: inherit; font: inherit; }
                .start { width: 48px; background: #1c2327; --size: 22px; }
                .search { display: flex; align-items: center; gap: 11px; width: 274px; padding-left: 12px; background: #f2f2f2; border: 1px solid #bbb; color: #222; }
                .search input { flex: 1; min-width: 0; border: 0; outline: 0; padding: 0; background: none; font: 15px "Open Sans", sans-serif; }
                .search input::placeholder { color: #333; opacity: 1; }
                .search svg { margin-right: 2px; }
                .apps { display: flex; flex: 1; --size: 24px; }
                .apps .view { width: 50px; padding-right: 2px; --size: 16px; }
                .open { background: linear-gradient(#76b9ed, #76b9ed) 50% 100% / 40px 2px no-repeat; }
                .now { background: linear-gradient(#76b9ed, #76b9ed) 50% 100% / 100% 2px no-repeat #5b504a; }
                .tray { display: flex; align-items: center; gap: 8px; }
                .tray button { width: auto; }
                .tray .lang { margin: 0 4px 0 3px; }
                time { display: block; width: 56px; text-align: center; line-height: 18px; font-size: 11px; }
                .tray .notif { position: relative; margin: 0 20px 0 9px; }
                .notif b { position: absolute; left: 7px; top: 4px; width: 15px; height: 15px; border: 1px solid #888; border-radius: 50%; background: #3a3a3a; font: 11px/15px "Open Sans", sans-serif; }
                .desk { width: 1px; height: 40px; margin-right: 4px; background: #777; }
            </style>
            <button class="start" aria-label="Пуск"><cad-icon name="start"></cad-icon></button>
            <label class="search"><cad-icon name="search"></cad-icon><input type="text" placeholder="Поиск" aria-label="Поиск">
                <svg width="74" height="38" viewBox="0 0 74 38" aria-hidden="true">
                    <path fill="#a9d4f5" d="M8 14C20-2 52-2 64 12v18H8z"/>
                    <path fill="#e8a04c" d="M18 28l6-6 6 2 6-8 8 6 8-3 6 9v7H18z"/>
                    <path fill="#f3c27a" d="M24 22l6 2 6-8 4 3-5 10H22z"/>
                    <path fill="#c9584d" d="M1 12h6v6l6-1 14-8 24-1 14 3v-4h8c2 12 0 24-6 28l-9 1c3-15-6-22-17-22S23 22 20 37h-7C4 33 0 26 1 12z"/>
                    <path fill="#e98a70" d="M10 17l17-7h24l13 3v3L50 12l-22 1-18 8zM60 22l11-6v4l-10 7zM2 20l12 5v4L4 25z"/>
                    <path fill="#d9b38c" d="M13 37l22-4 27 4z"/>
                    <path fill="#5d8a44" d="M17 31q5-4 9 0v4h-9zM38 33q5-5 10 0v4H38zM56 29h5v7h-5z"/>
                </svg>
            </label>
            <div class="apps">
                <button class="view" aria-label="Представление задач"><cad-icon name="taskview"></cad-icon></button>
                <button aria-label="Edge"><cad-icon name="edge"></cad-icon></button>
                <button class="open" aria-label="Проводник"><cad-icon name="explorer"></cad-icon></button>
                <button aria-label="Store"><cad-icon name="store"></cad-icon></button>
                <button aria-label="Калькулятор"><cad-icon name="calc"></cad-icon></button>
                <button aria-label="Приложение"><cad-icon name="pblue"></cad-icon></button>
                <button class="open" aria-label="Chrome"><cad-icon name="chrome"></cad-icon></button>
                <button class="open" aria-label="Word"><cad-icon name="word"></cad-icon></button>
                <button class="now" aria-label="КОМПАС"><cad-icon name="kompas"></cad-icon></button>
            </div>
            <div class="tray">
                <button aria-label="Скрытые значки"><cad-icon name="chev"></cad-icon></button>
                <cad-icon name="battery"></cad-icon><cad-icon name="meet"></cad-icon>
                <cad-icon name="sound"></cad-icon><cad-icon name="net"></cad-icon>
                <button class="lang">РУС</button>
                <time>12:53<br>16.04.2025</time>
                <button class="notif" aria-label="Уведомления"><cad-icon name="notif"></cad-icon><b>2</b></button>
            </div>
            <i class="desk"></i>
        `;
    }
}
customElements.define('task-bar', TaskBar);

class CadApp extends HTMLElement {
    constructor() {
        super();
        this.attachShadow({ mode: 'open' }).innerHTML = `
            <style>
                :host { display: flex; flex-direction: column; height: 100%; }
                main { display: flex; flex: 1; min-height: 0; }
            </style>
            <menu-bar></menu-bar>
            <tab-strip>основание.m3d</tab-strip>
            <cad-ribbon></cad-ribbon>
            <main>
                <side-strip></side-strip>
                <params-panel></params-panel>
                <model-view></model-view>
            </main>
            <task-bar></task-bar>
        `;
    }
}
customElements.define('cad-app', CadApp);
</script>
</body>
</html>
